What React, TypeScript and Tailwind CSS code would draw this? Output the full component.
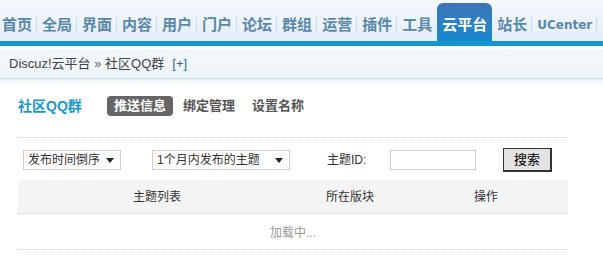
import React from 'react';

const cjk = { fontFamily: '"Liberation Sans", "Noto Sans CJK SC", sans-serif' };

const navItems = ['首页', '全局', '界面', '内容', '用户', '门户', '论坛', '群组', '运营', '插件', '工具'];

function Sep() {
    return <span className="ml-[4px] mr-[5px] h-[16px] w-px bg-[#c9dbe8]" />;
}

function NavBar() {
    return (
        <div className="h-[41px] flex items-end pl-[2px] bg-gradient-to-b from-[#f4f8fc] to-[#e4eef7]">
            {navItems.map((t, i) => (
                <div key={t} className="h-[38px] pt-[5px] flex items-center">
                    <span className="text-[15px] font-bold text-[#5a88a8] leading-none">{t}</span>
                    {i < navItems.length - 1 && <Sep />}
                </div>
            ))}
            <div className="ml-[5px] h-[38px] pt-[5px] px-[5px] flex items-center rounded-t-[6px] bg-gradient-to-b from-[#3c75b5] to-[#1189cf]">
                <span className="text-[15px] font-bold text-white leading-none">云平台</span>
            </div>
            <div className="ml-[5px] h-[38px] pt-[5px] flex items-center">
                <span className="text-[15px] font-bold text-[#5a88a8] leading-none">站长</span>
                <Sep />
            </div>
            <div className="h-[38px] pt-[5px] flex items-center">
                <span className="text-[12px] font-bold text-[#5a88a8] leading-none" style={{ fontFamily: '"DejaVu Sans", sans-serif' }}>
                    UCenter
                </span>
                <Sep />
            </div>
        </div>
    );
}

function Select({ label, width }: { label: string; width: string }) {
    return (
        <div className={`${width} h-[20px] flex items-center justify-between border border-[#cfcfcf] bg-white pl-[4px] pr-[6px]`}>
            <span className="text-[12px] text-[#333] leading-none">{label}</span>
            <span className="w-0 h-0 border-l-[4px] border-r-[4px] border-t-[5px] border-l-transparent border-r-transparent border-t-[#222]" />
        </div>
    );
}

export default function App() {
    return (
        <div className="w-[603px] h-[264px] overflow-hidden bg-white" style={cjk}>
            <NavBar />
            <div className="h-[5px] bg-[#1596cc]" />
            <div className="h-[3px] bg-white" />
            <div className="h-[30px] flex items-center pl-[9px] bg-gradient-to-b from-[#f3f8fb] to-[#edf4f9] border-b border-[#c6d6e2]">
                <span className="text-[13px] text-[#444]">Discuz!云平台 <span className="text-[#666]">»</span> 社区QQ群</span>
                <span className="ml-[8px] text-[13px] text-[#2b6aa6]">[+]</span>
            </div>
            <div className="h-[6px] bg-gradient-to-b from-[#eaf2f8] to-white" />

            <div className="ml-[18px] w-[550px]">
                <div className="mt-[11px] h-[20px] flex items-center">
                    <h2 className="w-[89px] text-[14px] font-bold text-[#1499d4] leading-none">社区QQ群</h2>
                    <div className="flex items-center gap-[3px]">
                        <span className="h-[20px] px-[7px] flex items-center rounded-[4px] bg-[#666] text-white text-[13px] font-bold">推送信息</span>
                        <span className="h-[20px] px-[7px] flex items-center text-[#555] text-[13px] font-bold">绑定管理</span>
                        <span className="h-[20px] px-[7px] flex items-center text-[#555] text-[13px] font-bold">设置名称</span>
                    </div>
                </div>
                <div className="h-[22px] border-b border-dotted border-[#d8d8d8]" />

                <div className="mt-[12px] h-[20px] flex items-center">
                    <div className="ml-[5px]">
                        <Select label="发布时间倒序" width="w-[98px]" />
                    </div>
                    <div className="ml-[31px]">
                        <Select label="1个月内发布的主题" width="w-[138px]" />
                    </div>
                    <span className="ml-[37px] w-[63px] text-[12px] text-[#333]">主题ID:</span>
                    <div className="w-[86px] h-[20px] border border-[#cfcfcf] bg-white" />
                    <button className="ml-[27px] w-[49px] h-[24px] border border-[#333] border-r-2 border-b-2 bg-[#e3e3e3] text-[13px] text-black leading-none">
                        搜索
                    </button>
                </div>

                <div className="mt-[10px] h-[34px] flex items-center bg-[#f4f4f4] border-b border-dotted border-[#d0d0d0] text-[12px] text-[#333]">
                    <span className="w-[278px] text-center">主题列表</span>
                    <span className="w-[108px] text-center">所在版块</span>
                    <span className="w-[164px] text-center">操作</span>
                </div>
                <div className="h-[36px] pt-[3px] flex items-center justify-center border-b border-dotted border-[#d8d8d8] text-[12px] text-[#999]">
                    加载中...
                </div>
            </div>
        </div>
    );
}
